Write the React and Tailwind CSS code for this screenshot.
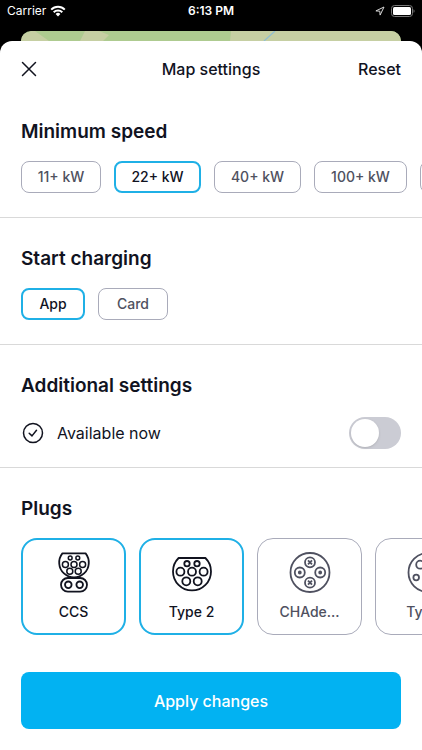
import React, { useState } from "react";

const speeds = [
  { label: "11+ kW", width: "w-20" },
  { label: "22+ kW", width: "w-[87px]" },
  { label: "40+ kW", width: "w-[87px]" },
  { label: "100+ kW", width: "w-[93px]" },
  { label: "150+ kW", width: "w-[93px]" },
];

const starts = [
  { label: "App", width: "w-16" },
  { label: "Card", width: "w-[70px]" },
];

function StatusBar() {
  return (
    <div className="grid h-[22px] grid-cols-3 items-center px-[7px] text-white">
      <div className="flex items-center gap-1 text-xs">
        <span>Carrier</span>
        <svg width="16" height="12" viewBox="0 0 16 12" fill="none" stroke="currentColor" strokeWidth="2" aria-hidden="true">
          <path d="M1.2 4.6a9.6 9.6 0 0 1 13.6 0" />
          <path d="M3.7 7.2a6.1 6.1 0 0 1 8.6 0" />
          <path d="M8 11.4 5.6 8.9a3.4 3.4 0 0 1 4.8 0Z" fill="currentColor" stroke="none" />
        </svg>
      </div>
      <div className="text-center text-xs font-semibold">6:13 PM</div>
      <div className="flex items-center justify-end gap-[6px]">
        <svg width="10" height="10" viewBox="0 0 10 10" fill="none" stroke="#d8d8d8" strokeWidth="1" strokeLinejoin="round" aria-hidden="true">
          <path d="M9 1 .9 4.9l3.9.3.3 3.9Z" />
        </svg>
        <svg width="24" height="12" viewBox="0 0 24 12" aria-hidden="true">
          <rect x=".5" y=".5" width="21" height="11" rx="3" fill="none" stroke="#777" />
          <rect x="2" y="2" width="18" height="8" rx="1.5" fill="#fff" />
          <path d="M22.6 4.2v3.6c1.2-.5 1.2-3.1 0-3.6Z" fill="#888" />
        </svg>
      </div>
    </div>
  );
}

function MapStrip() {
  return (
    <div className="mx-[21px] mt-[9px] h-[10px] overflow-hidden rounded-t-[10px] bg-[#aecb90]">
      <svg className="block h-full w-full" viewBox="0 0 380 10" preserveAspectRatio="none" aria-hidden="true">
        <path d="M0 10V4L10 0h4l14 10ZM59 10l5-10h14l10 4-6 6ZM210 0h170v10H209Z" fill="#c6cfa3" />
        <path d="m254 0-11 10" stroke="#8fbfd2" strokeWidth="1.2" />
      </svg>
    </div>
  );
}

function Chip({ label, width, selected, onClick }) {
  return (
    <button
      type="button"
      aria-pressed={selected}
      onClick={onClick}
      className={`h-8 shrink-0 rounded-lg bg-white text-sm font-medium ${width} ${
        selected ? "border-2 border-[#1fb0e6] text-[#11131f]" : "border border-[#a9abba] text-[#4f5160]"
      }`}
    >
      {label}
    </button>
  );
}

function Section({ title, children, last }) {
  return (
    <section className={last ? "pt-[29px]" : "border-b border-[#d9d9d9] pt-[29px]"}>
      <h2 className="mb-[17px] px-[21px] text-[19px] leading-6 font-semibold text-[#11131f]">{title}</h2>
      {children}
    </section>
  );
}

function Rings({ items }) {
  return items.map(([x, y, r]) => <circle key={`${x}-${y}`} cx={x} cy={y} r={r} />);
}

function CcsIcon() {
  return (
    <>
      <path d="M9.4 1.4h23.2A14.8 14.8 0 1 1 9.4 1.4Z" />
      <g strokeWidth="1.5">
        <Rings items={[[17.2, 6, 1.9], [24.8, 6, 1.9], [12.4, 12.4, 3], [21, 12.4, 3], [29.6, 12.4, 3], [16.8, 19.2, 3], [25.2, 19.2, 3]]} />
      </g>
      <rect x="8" y="26" width="26" height="13.6" rx="6.8" />
      <Rings items={[[15.3, 32.8, 3.3], [26.7, 32.8, 3.3]]} />
    </>
  );
}

function Type2Icon() {
  return (
    <>
      <path d="M7.6 6h26.8A19 19 0 1 1 7.6 6Z" />
      <Rings items={[[16, 11.7, 2.7], [26, 11.7, 2.7], [9.4, 19.7, 4], [21, 19.7, 4], [32.6, 19.7, 4], [15.3, 29.3, 4], [26.7, 29.3, 4]]} />
    </>
  );
}

function ChademoIcon() {
  return (
    <>
      <Rings items={[[21, 20.5, 19.5], [21, 10.3, 5], [10.8, 20.5, 5], [31.2, 20.5, 5], [21, 30.7, 5]]} />
      <path d="m19 8.3 4 4m0-4-4 4M19 28.7l4 4m0-4-4 4" />
      <circle cx="10.8" cy="20.5" r="1" fill="currentColor" />
      <circle cx="31.2" cy="20.5" r="1" fill="currentColor" />
    </>
  );
}

function Type1Icon() {
  return <Rings items={[[21, 20.5, 19.5], [13.2, 12.7, 4], [28.8, 12.7, 4], [9.2, 25.5, 2.8], [32.8, 25.5, 2.8], [21, 31, 4]]} />;
}

const plugs = [
  { label: "CCS", Icon: CcsIcon },
  { label: "Type 2", Icon: Type2Icon },
  { label: "CHAde...", Icon: ChademoIcon },
  { label: "Type 1", Icon: Type1Icon },
];

function PlugCard({ label, Icon, selected, onClick }) {
  return (
    <button
      type="button"
      aria-pressed={selected}
      onClick={onClick}
      className={`flex h-[97px] w-[105px] shrink-0 flex-col items-center justify-center gap-2 rounded-2xl bg-white text-sm leading-5 font-medium ${
        selected ? "border-2 border-[#1fb0e6] text-[#11131f]" : "border border-[#a9abba] text-[#4f5160]"
      }`}
    >
      <svg width="42" height="42" viewBox="0 0 42 42" fill="none" stroke="currentColor" strokeWidth="1.8" strokeLinejoin="round" aria-hidden="true">
        <Icon />
      </svg>
      {label}
    </button>
  );
}

export default function App() {
  const [speed, setSpeed] = useState("22+ kW");
  const [start, setStart] = useState("App");
  const [selectedPlugs, setSelectedPlugs] = useState(["CCS", "Type 2"]);

  const togglePlug = (label) =>
    setSelectedPlugs((list) => (list.includes(label) ? list.filter((l) => l !== label) : [...list, label]));

  return (
    <div className="flex min-h-screen flex-col bg-black font-['Inter','Liberation_Sans',sans-serif]">
      <StatusBar />
      <MapStrip />
      <main className="flex-1 rounded-t-xl bg-white pb-[21px]">
        <header className="grid grid-cols-[1fr_auto_1fr] items-center px-[21px] pt-4 pb-[10px] text-base leading-6 font-medium text-[#11131f]">
          <button type="button" aria-label="Close" className="justify-self-start">
            <svg width="16" height="16" viewBox="0 0 16 16" fill="none" stroke="currentColor" strokeWidth="1.5" strokeLinecap="round" aria-hidden="true">
              <path d="m1.5 1.5 13 13m0-13-13 13" />
            </svg>
          </button>
          <h1>Map settings</h1>
          <button type="button" className="justify-self-end">Reset</button>
        </header>

        <Section title="Minimum speed">
          <div className="flex gap-[13px] overflow-x-auto px-[21px] pb-6 [scrollbar-width:none]">
            {speeds.map((s) => (
              <Chip key={s.label} {...s} selected={speed === s.label} onClick={() => setSpeed(s.label)} />
            ))}
          </div>
        </Section>

        <Section title="Start charging">
          <div className="flex gap-[13px] px-[21px] pb-6">
            {starts.map((s) => (
              <Chip key={s.label} {...s} selected={start === s.label} onClick={() => setStart(s.label)} />
            ))}
          </div>
        </Section>

        <Section title="Additional settings">
          <div className="flex items-center px-[21px] pb-4 text-[#11131f]">
            <svg className="mr-3" width="24" height="24" viewBox="0 0 24 24" fill="none" stroke="currentColor" strokeWidth="1.5" strokeLinecap="round" strokeLinejoin="round" aria-hidden="true">
              <circle cx="12" cy="12" r="9.5" />
              <path d="m8.2 12.3 2.8 2.6 4.5-5.6" />
            </svg>
            <label htmlFor="available" className="flex-1 text-base leading-9">Available now</label>
            <input
              id="available"
              type="checkbox"
              role="switch"
              className="flex h-8 w-[52px] appearance-none items-center rounded-full bg-[#cbccd4] px-[2px] before:size-7 before:rounded-full before:bg-white before:shadow-sm before:content-[''] checked:justify-end checked:bg-[#02b2f2]"
            />
          </div>
        </Section>

        <Section title="Plugs" last>
          <div className="flex gap-[13px] overflow-x-auto px-[21px] [scrollbar-width:none]">
            {plugs.map((p) => (
              <PlugCard key={p.label} {...p} selected={selectedPlugs.includes(p.label)} onClick={() => togglePlug(p.label)} />
            ))}
          </div>
        </Section>

        <div className="px-[21px] pt-[37px]">
          <button type="button" className="h-[57px] w-full rounded-lg bg-[#02b2f2] text-base font-medium text-white">
            Apply changes
          </button>
        </div>
      </main>
    </div>
  );
}
